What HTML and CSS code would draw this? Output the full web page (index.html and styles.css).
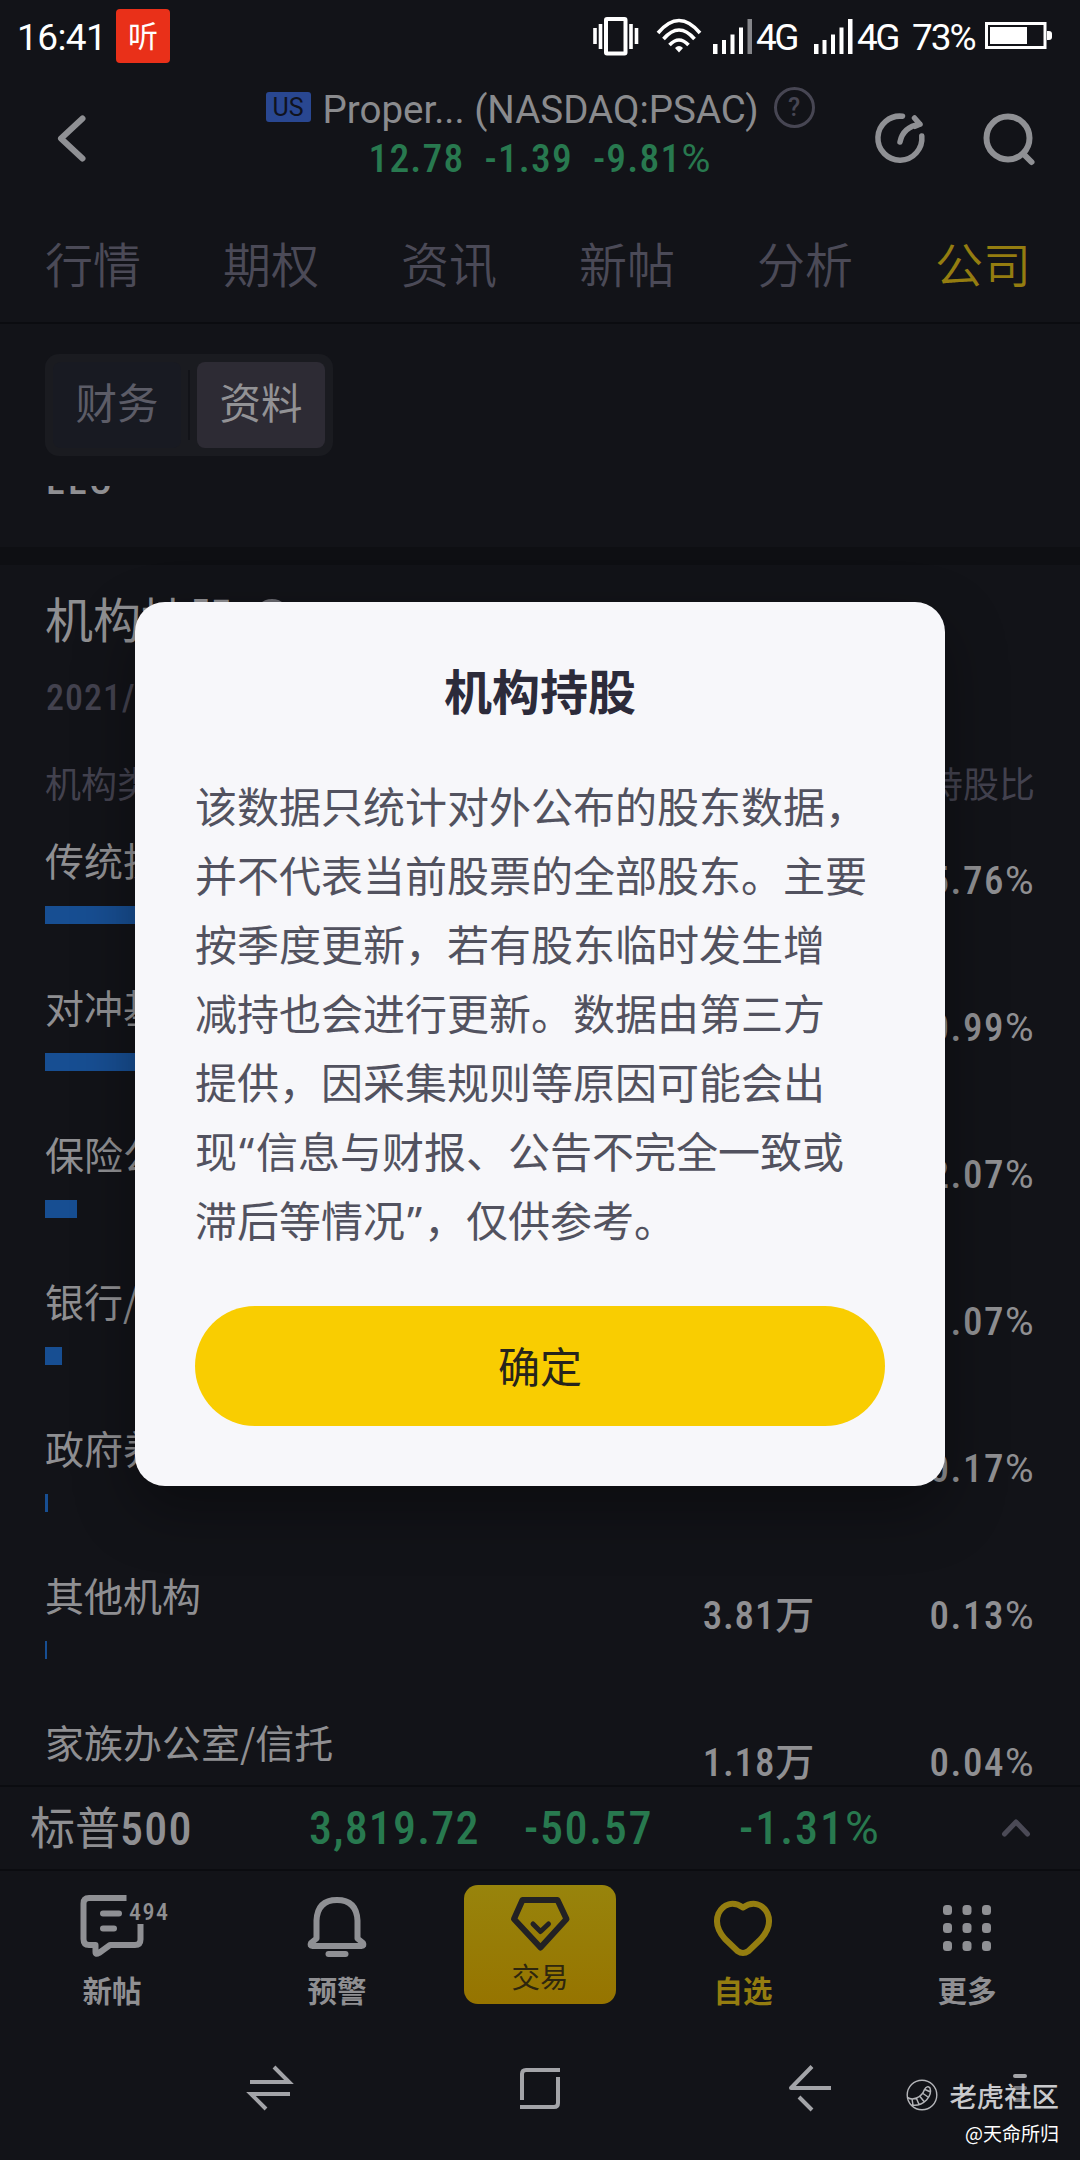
FILE: index.html
```html
<!DOCTYPE html>
<html lang="zh-CN">
<head>
<meta charset="utf-8">
<title>机构持股</title>
<link rel="stylesheet" href="styles.css">
</head>
<body>
<div class="phone">
  <header class="status">
    <span class="time">16:41</span>
    <span class="listen">听</span>
    <span class="spacer"></span>
    <svg class="vibrate" width="48" height="40" viewBox="0 0 48 40" fill="none" stroke="#fff"><rect x="14" y="3" width="19.500" height="34.500" rx="1" stroke-width="4"/><path d="M8.500 8v25M39 8v25M3 12v16M44.500 12v16" stroke-width="3.600"/></svg>
    <svg class="wifi" width="46" height="36" viewBox="0 0 46 36" fill="none" stroke="#fff" stroke-width="3.600"><path d="M2 15Q23-10 44 15M7.500 21Q23 3 38.500 21M13.500 27Q23 17 32.500 27"/><path d="M23 34.500l-4-4.500q4-4 8 0z" fill="#fff" stroke="none"/></svg>
    <svg class="signal" width="42" height="36" viewBox="0 0 42 36" fill="#fff"><path d="M1 26h4.500v10H1zM10 22h4v14h-4zM18.500 16.500h4V36h-4zM27 9.500h4V36h-4z"/><path d="M35.500 1h4.500v35h-4.500z" fill="#85868a"/></svg>
    <span class="net">4G</span>
    <svg class="signal second" width="42" height="36" viewBox="0 0 42 36" fill="#fff"><path d="M1 26h4.500v10H1zM9.500 22h4v14h-4zM18 16.500h4V36h-4zM26.500 9.500h4V36h-4zM35 1h4.500v35H35z"/></svg>
    <span class="net">4G</span>
    <span class="percent">73%</span>
    <svg class="battery" width="68" height="28" viewBox="0 0 68 28"><rect x="1.500" y="1.500" width="58.500" height="24" fill="none" stroke="#fff" stroke-width="3"/><path d="M5 5h37v17H5z" fill="#fff"/><path d="M62 9h2q3 0 3 3v3q0 3-3 3h-2z" fill="#fff"/></svg>
  </header>

  <section class="head">
    <svg class="back" width="32" height="50" viewBox="0 0 32 50" fill="none" stroke="#8f9094" stroke-width="6" stroke-linecap="round" stroke-linejoin="round"><path d="M26.500 5.500L5 25.500l21.500 20"/></svg>
    <div class="stock">
      <div class="stock-name"><span class="us">US</span><span class="name">Proper... (NASDAQ:PSAC)</span><span class="help">?</span></div>
      <div class="quote"><span>12.78</span><span>-1.39</span><span>-9.81<em class="pc">%</em></span></div>
    </div>
    <div class="tools">
      <svg width="52" height="52" viewBox="0 0 52 52" fill="none" stroke="#8f9094" stroke-width="5.500" stroke-linecap="round" stroke-linejoin="round"><path d="M28.500 4.300A22 22 0 1 0 47.800 24M26 30Q29 15 46 12.300M40.500 6l5.500 6.300-5 2"/></svg>
      <svg width="52" height="52" viewBox="0 0 52 52" fill="none" stroke="#8f9094" stroke-width="6" stroke-linecap="round"><circle cx="26" cy="26" r="21.500"/><path d="M42 42.500l7.500 7.500"/></svg>
    </div>
  </section>

  <nav class="tabs"><span>行情</span><span>期权</span><span>资讯</span><span>新帖</span><span>分析</span><span class="on">公司</span></nav>

  <main class="content">
    <div class="segment"><span class="seg">财务</span><i class="split"></i><span class="seg active">资料</span></div>
    <div class="cut"><span>LLC</span></div>
    <div class="band"></div>
    <h2 class="title">机构持股<span class="help small">?</span></h2>
    <div class="date">2021/03/31</div>
    <div class="thead"><span>机构类型</span><span>持股数</span><span>持股比</span></div>
    <div class="row"><div class="who"><b>传统投资机构</b><i style="width:554px"></i></div><span class="num">1032.45万</span><span class="num">35.76<em class="pc">%</em></span></div>
    <div class="row"><div class="who"><b>对冲基金</b><i style="width:170px"></i></div><span class="num">317.29万</span><span class="num">10.99<em class="pc">%</em></span></div>
    <div class="row"><div class="who"><b>保险公司</b><i style="width:32px"></i></div><span class="num">59.76万</span><span class="num">2.07<em class="pc">%</em></span></div>
    <div class="row"><div class="who"><b>银行/信托</b><i style="width:17px"></i></div><span class="num">30.89万</span><span class="num">1.07<em class="pc">%</em></span></div>
    <div class="row"><div class="who"><b>政府养老基金</b><i style="width:3px"></i></div><span class="num">4.91万</span><span class="num">0.17<em class="pc">%</em></span></div>
    <div class="row"><div class="who"><b>其他机构</b><i style="width:2px"></i></div><span class="num">3.81万</span><span class="num">0.13<em class="pc">%</em></span></div>
    <div class="row"><div class="who"><b>家族办公室/信托</b><i style="width:1px"></i></div><span class="num">1.18万</span><span class="num">0.04<em class="pc">%</em></span></div>
  </main>

  <section class="index">
    <span class="label">标普<em>500</em></span><span class="v v1">3,819.72</span><span class="v v2">-50.57</span><span class="v v3">-1.31<em class="pc">%</em></span>
    <svg width="30" height="20" viewBox="0 0 30 20" fill="none" stroke="#4b4a56" stroke-width="5" stroke-linecap="round" stroke-linejoin="round"><path d="M3.500 16L15 4l11.500 12"/></svg>
  </section>

  <footer class="bar">
    <div class="item">
      <span class="pic"><svg width="64" height="64" viewBox="0 0 64 64" fill="none" stroke="#8f9094" stroke-width="6" stroke-linejoin="round"><path d="M46.500 4H9Q3.500 4 3.500 9.500V45q0 6 5.500 6h6.500v7q0 3 3.500 1L30 51h25q5.500 0 5.500-5.500V30"/><path d="M23 19.500h16M23 34.500h11" stroke-linecap="round"/></svg><span class="count">494</span></span>
      <b>新帖</b>
    </div>
    <div class="item">
      <span class="pic"><svg width="64" height="64" viewBox="0 0 64 64" fill="none" stroke="#8f9094" stroke-width="6" stroke-linejoin="round" stroke-linecap="round"><path d="M11.500 44.500V26.500Q12.500 6 32 6t20.500 20.500v18l5.500 4.500q1.500 3-1.500 3h-49q-3 0-1.500-3z"/><path d="M23.500 60h17"/></svg></span>
      <b>预警</b>
    </div>
    <div class="item trade">
      <svg width="60" height="56" viewBox="0 0 60 56" fill="none" stroke="#222124" stroke-width="6" stroke-linejoin="round" stroke-linecap="round"><path d="M12.500 4h35L56.500 23 30.500 51.500 4 23z"/><path d="M23 28l7.500 7.500L38.500 28" stroke-width="5"/></svg>
      <span>交易</span>
    </div>
    <div class="item gold">
      <span class="pic"><svg width="64" height="64" viewBox="0 0 64 64" fill="none" stroke="#947d10" stroke-width="6" stroke-linejoin="round"><path d="M32 13.500C42 6.500 52 10 56.500 19.500 60 28 57 37 50 45L37.500 57q-5.500 4-11 0L14 45C7 37 4 28 7.500 19.500 12 10 22 6.500 32 13.500z"/></svg></span>
      <b>自选</b>
    </div>
    <div class="item">
      <span class="pic"><svg width="64" height="64" viewBox="0 0 64 64" fill="#8f9094"><rect x="8" y="11" width="9" height="10" rx="3.500"/><rect x="27.500" y="11" width="9" height="10" rx="3.500"/><rect x="47" y="11" width="9" height="10" rx="3.500"/><rect x="8" y="29" width="9" height="10" rx="3.500"/><rect x="27.500" y="29" width="9" height="10" rx="3.500"/><rect x="47" y="29" width="9" height="10" rx="3.500"/><rect x="8" y="47" width="9" height="10" rx="3.500"/><rect x="27.500" y="47" width="9" height="10" rx="3.500"/><rect x="47" y="47" width="9" height="10" rx="3.500"/></svg></span>
      <b>更多</b>
    </div>
  </footer>

  <div class="system">
    <svg width="48" height="48" viewBox="0 0 48 48" fill="none" stroke="#a3a4a8" stroke-width="4"><path d="M4 18h39L28 3M44 30H5l15 15"/></svg>
    <svg width="48" height="48" viewBox="0 0 48 48" fill="none" stroke="#a3a4a8" stroke-width="4"><path d="M6 36V10q0-4 4-4h34M42 13v26q0 4-4 4H4"/></svg>
    <svg width="48" height="48" viewBox="0 0 48 48" fill="none" stroke="#a3a4a8" stroke-width="4" stroke-linejoin="round"><path d="M45 24H5L26 2.500M13 33l13 13"/></svg>
    <svg width="48" height="48" viewBox="0 0 48 48" fill="none" stroke="#a3a4a8" stroke-width="4" stroke-linecap="round"><path d="M19 12h10"/><path d="M19 24h10M19 36h10" stroke="#77787c"/></svg>
  </div>

  <div class="mark">
    <div class="brand"><svg width="32" height="32" viewBox="0 0 32 32" fill="none" stroke="#b4b5b9" stroke-width="1.400"><circle cx="16" cy="16" r="14.800"/><path d="M1.500 18.500q4 2.500 9 .500 6-2.500 8-8.500 2.500-4.500 5.500-1.500 2 6-3.500 12-6.500 6.500-15 5M6 20l1 6M10.500 19.500l2.500 6M14 17.500l4 5M17 14.500l5 3.500M19 10.500l5.500 2.500" stroke-width="1.500"/></svg><b>老虎社区</b></div>
    <span>@天命所归</span>
  </div>

  <div class="dialog">
    <h3>机构持股</h3>
    <p>该数据只统计对外公布的股东数据，<br>并不代表当前股票的全部股东。主要<br>按季度更新，若有股东临时发生增<br>减持也会进行更新。数据由第三方<br>提供，因采集规则等原因可能会出<br>现<q>“</q>信息与财报、公告不完全一致或<br>滞后等情况<q>”</q>，仅供参考。</p>
    <button>确定</button>
  </div>
</div>
</body>
</html>
```
FILE: styles.css
```css
* { box-sizing: border-box; }
body { margin: 0; background: #121318; font-family: "Noto Sans CJK SC", sans-serif; color: #8f8f92; }
svg { display: block; flex: none; overflow: visible; }
i, em { font-style: normal; }
.phone { position: relative; width: 1080px; height: 2160px; overflow: hidden; display: flex; flex-direction: column; background: #121318; }

.status { height: 72px; flex: none; display: flex; align-items: center; padding: 0 27px 0 17px; color: #fff; font: 37px/72px Roboto, sans-serif; }
.time { width: 99px; letter-spacing: -.6px; padding-top: 3px; }
.listen { width: 54px; height: 54px; border-radius: 4px; background: #e93019; font: 400 30px/50px "Noto Sans CJK SC", sans-serif; text-align: center; }
.spacer { flex: 1; }
.vibrate { margin-right: 16px; }
.wifi { margin-right: 10px; }
.net { width: 44px; margin-left: 2px; letter-spacing: -2.500px; padding-top: 4px; }
.second { margin-left: 13px; }
.percent { width: 73px; margin-left: 11px; letter-spacing: -2px; padding-top: 4px; }

.head { height: 140px; flex: none; display: flex; position: relative; justify-content: center; }
.back { position: absolute; left: 56px; top: 41px; }
.stock { display: flex; flex-direction: column; align-items: center; padding-top: 10px; }
.stock-name { display: flex; align-items: center; height: 50px; font: 38.500px/50px Roboto, sans-serif; color: #8a8b8e; }
.us { width: 45px; height: 30px; border-radius: 3px; background: #294791; color: #10131f; font-size: 25px; line-height: 31px; text-align: center; margin-right: 12px; }
.name { width: 441px; white-space: nowrap; padding-top: 5px; }
.help { width: 41px; height: 41px; border: 3px solid #474653; border-radius: 50%; color: #474653; font: 500 25px/35px Roboto, sans-serif; text-align: center; margin-left: 10px; }
.quote { display: flex; gap: 20px; font: 500 39.500px/54px "Roboto Condensed", Roboto, sans-serif; letter-spacing: 1.200px; color: #28794f; }
.pc { font-family: Roboto, sans-serif; font-weight: 400; }
.tools { position: absolute; right: 46px; top: 40px; display: flex; gap: 56px; }

.tabs { height: 112px; flex: none; display: flex; justify-content: space-between; padding: 0 49px 0 45px; font-size: 48px; line-height: 100px; font-weight: 350; color: #4b4a57; border-bottom: 2px solid #0b0c10; }
.on { color: #947d10; }

.content { height: 1461px; flex: none; overflow: hidden; }
.segment { width: 288px; height: 102px; margin: 30px 0 0 45px; border-radius: 14px; background: #1a1b20; display: flex; align-items: center; padding: 8px; }
.seg { width: 128px; height: 86px; border-radius: 8px; font-size: 41.500px; line-height: 79px; text-align: center; color: #5c5c67; background: #181a22; }
.split { width: 2px; height: 70px; background: #121318; margin: 0 7px; }
.active { background: #2d2b34; color: #929295; }
.cut { height: 61px; margin-top: 30px; padding-left: 46px; overflow: hidden; font: 500 39px/46px "Roboto Condensed", Roboto, sans-serif; letter-spacing: 3.500px; }
.cut span { display: block; margin-top: -28px; }
.band { height: 18px; background: #0e0f13; }
.title { height: 110px; margin: 0; padding: 0 45px 6px; font-size: 48px; line-height: 104px; font-weight: 400; display: flex; align-items: center; }
.small { margin-left: 17px; border-color: #68686e; width: 36px; height: 36px; line-height: 30px; }
.date { height: 50px; padding: 0 46px; font: 500 36px/46px "Roboto Condensed", Roboto, sans-serif; letter-spacing: 1px; color: #43424f; }
.thead { height: 106px; display: grid; grid-template-columns: minmax(0, 1fr) 270px 220px; padding: 0 45px; font-size: 36px; line-height: 115px; color: #43424f; }
.thead span + span { text-align: right; }
.row { height: 147px; display: grid; grid-template-columns: minmax(0, 1fr) 270px 220px; padding: 0 45px; }
.who b { display: block; height: 75px; font-size: 39px; line-height: 56px; font-weight: 400; white-space: nowrap; }
.who i { display: block; height: 18px; background: #174e92; }
.num { text-align: right; font: 500 39px/101px "Roboto Condensed", "Noto Sans CJK SC", sans-serif; letter-spacing: .8px; }
.num:last-child { letter-spacing: 1.500px; }

.index { height: 86px; flex: none; border-top: 2px solid #0b0c10; border-bottom: 2px solid #0b0c10; display: flex; align-items: center; padding-left: 30px; }
.label { width: 279px; font-size: 45px; line-height: 80px; white-space: nowrap; padding-bottom: 2px; }
.label em, .v { font-family: "Roboto Condensed", Roboto, sans-serif; font-size: 46px; font-weight: 500; letter-spacing: 1.200px; }
.v { color: #28794f; line-height: 80px; }
.v1 { width: 215px; }
.v2 { width: 215px; letter-spacing: 1.700px; }
.v3 { width: 262px; letter-spacing: 2px; }

.bar { height: 144px; flex: none; display: grid; grid-template-columns: 224px 226px 180px 226px 222px; justify-items: center; }
.item { display: flex; flex-direction: column; align-items: center; padding-top: 23px; }
.pic { position: relative; height: 64px; }
.count { position: absolute; left: 49px; top: 4px; font: 500 24px/28px "Roboto Condensed", Roboto, sans-serif; letter-spacing: 1.500px; }
.item b { font-size: 29.500px; line-height: 63px; font-weight: 700; }
.trade { width: 152px; height: 119px; margin-top: 14px; padding-top: 11px; border-radius: 14px; background: linear-gradient(#98840c, #967400); color: #2e260e; font-size: 28.500px; line-height: 48px; }
.gold { color: #947d10; }

.system { flex: 1; display: grid; grid-template-columns: repeat(4, 48px); column-gap: 222px; padding: 49px 0 0 246px; }
.system svg:last-child { margin-left: -60px; }

.mark { position: absolute; right: 21px; top: 2076px; display: flex; flex-direction: column; align-items: flex-end; color: #fff; font-size: 19px; line-height: 38px; }
.brand { display: flex; align-items: center; gap: 11px; height: 38px; color: #c9cacd; font-size: 27.400px; }
.brand b { font-weight: 500; padding-bottom: 1px; }

.dialog { position: absolute; left: 135px; top: 602px; width: 810px; height: 884px; border-radius: 30px; background: #f7f7fa; box-shadow: 0 24px 60px rgba(0, 0, 0, .35); padding: 46px 60px 60px; display: flex; flex-direction: column; }
.dialog h3 { margin: 0; font-size: 48px; line-height: 82px; color: #2c2b3a; text-align: center; }
.dialog p { margin: 40px 0 0; font-size: 42px; line-height: 69px; color: #52525f; white-space: nowrap; text-spacing-trim: space-all; }
.dialog q { quotes: none; font-family: "Noto Sans", sans-serif; line-height: 1; padding: 0 2px; }
.dialog button { margin-top: auto; height: 120px; border: 0; border-radius: 60px; background: #f9cd01; font: 42px/114px "Noto Sans CJK SC", sans-serif; color: #26241c; padding: 0 0 3px; }
```
